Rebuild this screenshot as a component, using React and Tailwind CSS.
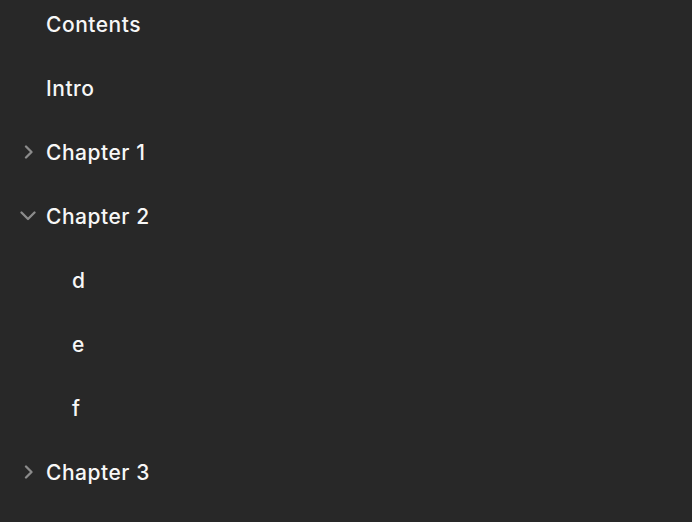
import React from "react";

const ChevronRight = () => (
  <svg width="10" height="14" viewBox="0 0 10 14" fill="none">
    <path d="M2 1.5 L7.5 7 L2 12.5" stroke="#8c8c8c" strokeWidth="2.3" strokeLinecap="round" strokeLinejoin="round" />
  </svg>
);

const ChevronDown = () => (
  <svg width="16" height="10" viewBox="0 0 16 10" fill="none">
    <path d="M1.5 1.5 L8 8 L14.5 1.5" stroke="#8c8c8c" strokeWidth="2.3" strokeLinecap="round" strokeLinejoin="round" />
  </svg>
);

function Row({ label, icon, indent }) {
  return (
    <div className="relative flex h-12 items-center">
      {icon === "right" && (
        <span className="absolute left-[24px] top-1/2 -translate-y-1/2 flex">
          <ChevronRight />
        </span>
      )}
      {icon === "down" && (
        <span className="absolute left-[20px] top-1/2 -translate-y-1/2 flex">
          <ChevronDown />
        </span>
      )}
      <span className={indent ? "pl-[72px]" : "pl-[46px]"}>{label}</span>
    </div>
  );
}

export default function App() {
  return (
    <div
      className="w-[692px] h-[522px] bg-[#282828] text-[#f7f7f7] text-[21px] font-medium leading-none tracking-[0.025em] flex flex-col gap-4"
      style={{ fontFamily: "Inter, 'Liberation Sans', sans-serif" }}
    >
      <Row label="Contents" />
      <Row label="Intro" />
      <Row label="Chapter 1" icon="right" />
      <Row label="Chapter 2" icon="down" />
      <Row label="d" indent />
      <Row label="e" indent />
      <Row label="f" indent />
      <Row label="Chapter 3" icon="right" />
    </div>
  );
}
